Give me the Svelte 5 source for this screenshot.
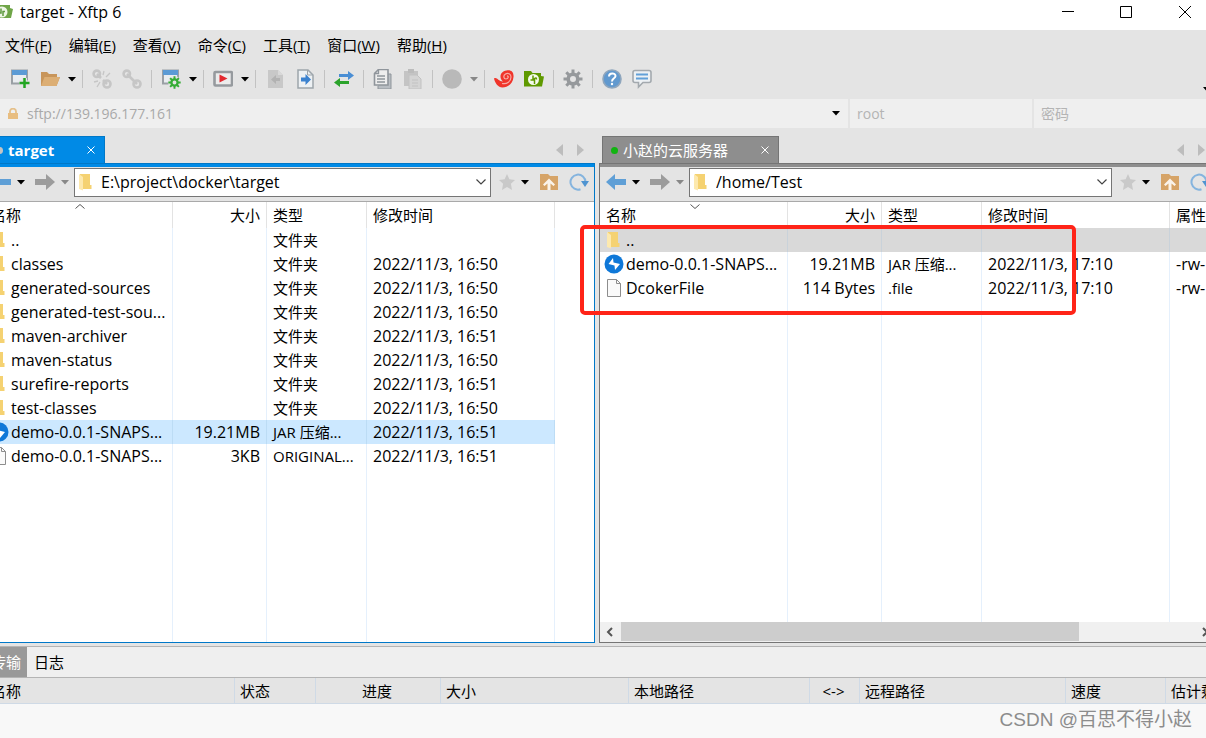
<script lang="ts">
	type FileRow = {
		icon: string;
		name: string;
		size?: string;
		type?: string;
		date?: string;
		attr?: string;
	};

	const menus = [
		["文件", "F"],
		["编辑", "E"],
		["查看", "V"],
		["命令", "C"],
		["工具", "T"],
		["窗口", "W"],
		["帮助", "H"],
	];

	// "|" = separator, "v" = drop-down arrow
	const tools = [
		"new", "open", "v", "|",
		"unlink", "link", "|",
		"session", "v", "|",
		"play", "v", "|",
		"docLeft", "docRight", "|",
		"sync", "|",
		"copy", "paste", "|",
		"globe", "vgray", "|",
		"xshell", "xftp", "|",
		"gear", "|",
		"help", "chat",
	];

	const localFiles: FileRow[] = [
		{ icon: "folder", name: "..", type: "文件夹" },
		{ icon: "folder", name: "classes", type: "文件夹", date: "2022/11/3, 16:50" },
		{ icon: "folder", name: "generated-sources", type: "文件夹", date: "2022/11/3, 16:50" },
		{ icon: "folder", name: "generated-test-sou...", type: "文件夹", date: "2022/11/3, 16:50" },
		{ icon: "folder", name: "maven-archiver", type: "文件夹", date: "2022/11/3, 16:51" },
		{ icon: "folder", name: "maven-status", type: "文件夹", date: "2022/11/3, 16:50" },
		{ icon: "folder", name: "surefire-reports", type: "文件夹", date: "2022/11/3, 16:51" },
		{ icon: "folder", name: "test-classes", type: "文件夹", date: "2022/11/3, 16:50" },
		{ icon: "jar", name: "demo-0.0.1-SNAPS...", size: "19.21MB", type: "JAR 压缩...", date: "2022/11/3, 16:51" },
		{ icon: "file", name: "demo-0.0.1-SNAPS...", size: "3KB", type: "ORIGINAL...", date: "2022/11/3, 16:51" },
	];

	const remoteFiles: FileRow[] = [
		{ icon: "folder", name: ".." },
		{ icon: "jar", name: "demo-0.0.1-SNAPS...", size: "19.21MB", type: "JAR 压缩...", date: "2022/11/3, 17:10", attr: "-rw-" },
		{ icon: "file", name: "DcokerFile", size: "114 Bytes", type: ".file", date: "2022/11/3, 17:10", attr: "-rw-" },
	];

	let host = $state("sftp://139.196.177.161");
	let user = $state("");
	let password = $state("");
	let localPath = $state("E:\\project\\docker\\target");
	let remotePath = $state("/home/Test");
	let localSelected = $state(8);
	let remoteSelected = $state(0);
</script>

{#snippet caret(gray = false)}
	<svg class="caret" class:gray width="8" height="5" viewBox="0 0 8 5"><path d="M0 0h8L4 4.5z" /></svg>
{/snippet}

{#snippet chevron()}
	<svg width="12" height="8" viewBox="0 0 12 8"><path d="M1.5 1.5 6 6l4.500-4.500" fill="none" stroke="#444" stroke-width="1.200" /></svg>
{/snippet}

{#snippet gearShape(color: string)}
	<g stroke={color} fill="none">
		<circle cx="10" cy="10" r="4.800" stroke-width="3.600" />
		<path d="M10 0.500v4M10 15.500v4M0.500 10h4M15.500 10h4M3.300 3.300l2.800 2.800M13.900 13.900l2.800 2.800M3.300 16.700l2.800-2.800M13.900 6.100l2.800-2.800" stroke-width="3" />
	</g>
{/snippet}

{#snippet toolIcon(name: string)}
	<svg width="20" height="20" viewBox="0 0 20 20">
		{#if name === "new"}
			<path d="M2 1.500h15v13H2z" fill="#e9edf0" stroke="#9aa0a5" stroke-width="2" />
			<path d="M2 1h15v5H2z" fill="#5b9bd5" />
			<path d="M14.500 9v10M9.500 14h10" stroke="#e4e4e4" stroke-width="5" />
			<path d="M14.500 9v10M9.500 14h10" stroke="#22a522" stroke-width="2.500" />
		{:else if name === "open"}
			<path d="M1 3h6l2 2h8v3h3l-3.500 9H1z" fill="#c8955a" />
			<path d="M4.500 8H20l-3.500 9H1z" fill="#dcae74" />
		{:else if name === "unlink" || name === "link"}
			<g fill="none" stroke="#c6c6c6" stroke-width="2.600">
				<circle cx="4.800" cy="4.800" r="3.200" />
				<circle cx="15" cy="15" r="3.500" />
				{#if name === "link"}
					<path d="M5 5l10 10" />
				{:else}
					<path d="M5 5l4 4M11 11l4 4" />
					<path d="M11 6l1-4M14 8l4-4M6 12l-4 1M8 13l-3 5" stroke-width="1.300" />
				{/if}
			</g>
		{:else if name === "session"}
			<path d="M2 1.500h15v13H2z" fill="#e9edf0" stroke="#9aa0a5" stroke-width="2" />
			<path d="M2 1h15v5H2z" fill="#5b9bd5" />
			<circle cx="13.500" cy="13.500" r="6.500" fill="#e4e4e4" />
			<g transform="translate(7 7) scale(.65)">{@render gearShape("#35ad35")}</g>
		{:else if name === "play"}
			<rect x="1.500" y="3" width="17.500" height="13.500" rx="1" fill="#ececec" stroke="#969a9e" stroke-width="2.600" />
			<path d="M6.500 5.500v8l8-4z" fill="#e3292f" />
		{:else if name === "docLeft"}
			<path d="M3 1h10l5 5v13H3z" fill="#c8c8c8" />
			<path d="M13 1v5h5" fill="#d9d9d9" />
			<path d="M6 10.500l5-4.500v3h4v3h-4v3z" fill="#b2b2b2" />
		{:else if name === "docRight"}
			<path d="M3 1h10l5 5v13H3z" fill="#edf1f4" stroke="#9da5ab" stroke-width="1.500" />
			<path d="M12.500 1v5H18" fill="none" stroke="#9da5ab" />
			<path d="M16 10.500 10.500 5v3.500H6v4h4.500V16z" fill="#3b82cf" />
		{:else if name === "sync"}
			<path d="M5 5h9V2l6 4.500-6 4.500V8H5z" fill="#4a8ed4" />
			<path d="M15 12H6V9L0 13.500 6 18v-3h9z" fill="#2ba32b" />
		{:else if name === "copy"}
			<path d="M6 5h12v15H5v-3" fill="#b8bdc2" stroke="#8f959b" />
			<path d="M1.500 4.500 5.500.500H15V16H1.500z" fill="#ededed" stroke="#8f959b" stroke-width="1.600" />
			<path d="M5.500.500v4h-4M4 7h8M4 10h8M4 13h8" fill="none" stroke="#8f959b" stroke-width="1.300" />
		{:else if name === "paste"}
			<path d="M1 2h14v15H1z" fill="#c4c4c4" />
			<path d="M5 0h6v4H5z" fill="#bcbcbc" />
			<path d="M6 6h8l4 4v10H6z" fill="#d4d4d4" stroke="#c2c2c2" />
			<path d="M9 11h6M9 14h6M9 17h6" stroke="#c2c2c2" />
		{:else if name === "globe"}
			<circle cx="10" cy="10" r="9.800" fill="#b9b9b9" />
		{:else if name === "xshell"}
			<path d="M0 9.500c3-2 4 3 9 3-4-3-3.500-10 3.500-11C17 .500 20 3 19.500 8c-.500 7-6 10.500-11 10.500C4 18.500 1 14 0 9.500z" fill="#f0352b" />
			<path d="M8 14.500c5 1 9-2 9-6.500 0-3-3-4.500-5.500-3S9.500 10 12 10s3-3 1-3.200" fill="none" stroke="#f7aaa4" stroke-width="1.200" />
		{:else if name === "xftp"}
			<path d="M0 2h7l1.500 2H17v3l3 .500-2 10H0z" fill="#5f9900" />
			<circle cx="9.500" cy="10.500" r="5.500" fill="#f4faec" />
			<path d="M9 6.500V11H6.500M10.500 15v-5.500q2-1.500 2 1" fill="none" stroke="#5f9900" stroke-width="1.500" />
		{:else if name === "gear"}
			{@render gearShape("#96999c")}
		{:else if name === "help"}
			<circle cx="10" cy="10" r="9" fill="#6199cf" stroke="#8fa6bd" stroke-width="1.600" />
			<path d="M7 7.500c0-4 6.500-4 6.500-.500C13.500 9.500 10 9 10 12.500" fill="none" stroke="#fff" stroke-width="2" />
			<circle cx="10" cy="15" r="1.200" fill="#fff" />
		{:else if name === "chat"}
			<path d="M3 1.500h14q2 0 2 2v8q0 2-2 2h-6L6.500 18v-4.500H3q-2 0-2-2v-8q0-2 2-2z" fill="#edf1f4" stroke="#a3a9ae" stroke-width="1.600" />
			<path d="M4 5.500h12M4 9.500h12" stroke="#62a0d8" stroke-width="2" />
		{/if}
	</svg>
{/snippet}

{#snippet fileIcon(name: string)}
	<svg class="file-icon" width="16" height="18" viewBox="0 0 16 18">
		{#if name === "folder"}
			<path d="M2 1h10v11h1.500v4H2z" fill="#f5d272" />
			<path d="M1 1 5 4v13.500L1 16z" fill="#fde9ae" />
		{:else if name === "jar"}
			<circle cx="8" cy="9" r="9.500" fill="#0f78d8" />
			<path d="M7 3l.500 4.500L14 9l-5 6-.500-4.500L2.500 9z" fill="#fff" />
		{:else}
			<path d="M1.500.500h9l4 4v13h-13z" fill="#fafafa" stroke="#8d8d8d" />
			<path d="M10.500.500v4h4" fill="none" stroke="#8d8d8d" />
		{/if}
	</svg>
{/snippet}

{#snippet tab(title: string, remote: boolean)}
	<div class="tabs">
		<button class="tab" class:bold={!remote}>
			<span class="dot" class:online={remote}></span>
			<span class="tab-title">{title}</span>
			<svg width="8" height="8" viewBox="0 0 8 8"><path d="M.500.500l7 7M7.500.500l-7 7" stroke="#fff" /></svg>
		</button>
		<span class="tab-scroll">
			<svg width="7" height="12" viewBox="0 0 7 12"><path d="M7 0v12L0 6z" fill="#bdbdbd" /></svg>
			<svg width="7" height="12" viewBox="0 0 7 12"><path d="M0 0v12l7-6z" fill="#bdbdbd" /></svg>
		</span>
	</div>
{/snippet}

{#snippet navBack()}
	<button class="nav" aria-label="后退">
		<svg width="20" height="18" viewBox="0 0 20 18"><path d="M0 9l9-8v5h11v6H9v5z" fill="#5f9fd6" /></svg>
		{@render caret()}
	</button>
	<button class="nav" aria-label="前进">
		<svg width="20" height="18" viewBox="0 0 20 18"><path d="M20 9l-9-8v5H0v6h11v5z" fill="#9c9c9c" /></svg>
		{@render caret(true)}
	</button>
{/snippet}

{#snippet navActions()}
	<button class="nav star" aria-label="收藏">
		<svg width="16" height="16" viewBox="0 0 16 16"><path d="M8 0l2.400 5.200 5.600.700-4.100 3.900L13 16l-5-3-5 3 1.100-6.200L0 5.900l5.600-.700z" fill="#c9c9c9" /></svg>
		{@render caret()}
	</button>
	<button class="nav" aria-label="上级目录">
		<svg width="20" height="18" viewBox="0 0 20 18">
			<path d="M1 1h8l2 2h8v14H1z" fill="#d6a468" />
			<path d="M10 5.500l6 6-1.500 1.500-3-2.500V17h-3v-6.500L5.500 13 4 11.500z" fill="#faf3ea" />
		</svg>
	</button>
	<button class="nav" aria-label="刷新">
		<svg width="20" height="18" viewBox="0 0 20 18">
			<path d="M11.500 16.200A7.500 7.500 0 1 1 16.500 9" fill="none" stroke="#85b4de" stroke-width="2" />
			<path d="M12 8h8l-4 6z" fill="#4f94d1" />
		</svg>
	</button>
{/snippet}

{#snippet fileTable(rows: FileRow[], selected: number, pick: (i: number) => void)}
	<table class="files">
		<thead>
			<tr>
				<th class="name">名称</th>
				<th class="size">大小</th>
				<th class="type">类型</th>
				<th class="date">修改时间</th>
				<th class="attr">{rows === remoteFiles ? "属性" : ""}</th>
			</tr>
		</thead>
		<tbody>
			{#each rows as row, i}
				<tr class:selected={i === selected} onclick={() => pick(i)}>
					<td><span class="entry">{@render fileIcon(row.icon)}{row.name}</span></td>
					<td class="size">{row.size ?? ""}</td>
					<td class="kind">{row.type ?? ""}</td>
					<td>{row.date ?? ""}</td>
					<td>{row.attr ?? ""}</td>
				</tr>
			{/each}
			<tr class="filler"><td></td><td></td><td></td><td></td><td></td></tr>
		</tbody>
	</table>
{/snippet}

<div class="window">
	<header class="titlebar">
		<svg width="20" height="16" viewBox="0 0 20 16">
			<path d="M0 1h17v3l3 1-2 9H0z" fill="#6fa548" />
			<circle cx="9" cy="8" r="5.500" fill="#eef6e6" />
			<path d="M8 4.500V9H6M10 12V7.500h2" fill="none" stroke="#5f9940" stroke-width="1.500" />
		</svg>
		<h1>target - Xftp 6</h1>
		<button aria-label="最小化"><svg width="12" height="12" viewBox="0 0 12 12"><path d="M0 5.500h12" /></svg></button>
		<button aria-label="最大化"><svg width="12" height="12" viewBox="0 0 12 12"><path d="M.500.500h11v11H.500z" /></svg></button>
		<button aria-label="关闭"><svg width="12" height="12" viewBox="0 0 12 12"><path d="M0 0l12 12M12 0 0 12" /></svg></button>
	</header>

	<nav class="menubar">
		{#each menus as [label, key]}
			<button>{label}(<u>{key}</u>)</button>
		{/each}
	</nav>

	<div class="toolbar">
		{#each tools as tool}
			{#if tool === "|"}
				<span class="separator"></span>
			{:else if tool === "v" || tool === "vgray"}
				<button class="drop" aria-label="更多">{@render caret(tool === "vgray")}</button>
			{:else}
				<button class="tool" aria-label={tool}>{@render toolIcon(tool)}</button>
			{/if}
		{/each}
		<span class="overflow">{@render caret()}</span>
	</div>

	<div class="address">
		<label class="host">
			<svg width="12" height="12" viewBox="0 0 12 12">
				<path d="M3 5V3.500a3 2.800 0 0 1 6 0V5" fill="none" stroke="#e5c08a" stroke-width="1.800" />
				<path d="M1 5h10v6H1z" fill="#e8bd80" />
			</svg>
			<input aria-label="主机" bind:value={host} />
			{@render caret()}
		</label>
		<input aria-label="用户名" placeholder="root" bind:value={user} />
		<input aria-label="密码" type="password" placeholder="密码" bind:value={password} />
	</div>

	<main class="panes">
		<section class="pane local">
			{@render tab("target", false)}
			<div class="pane-body">
				<div class="pathbar">
					{@render navBack()}
					<label class="path">
						{@render fileIcon("folder")}
						<input aria-label="本地路径" bind:value={localPath} />
						{@render chevron()}
					</label>
					{@render navActions()}
				</div>
				<div class="listing">
					<svg class="sort" width="10" height="5" viewBox="0 0 10 5"><path d="M.500 4.500 5 .500l4.500 4" /></svg>
					{@render fileTable(localFiles, localSelected, (i) => (localSelected = i))}
				</div>
			</div>
		</section>

		<section class="pane remote">
			{@render tab("小赵的云服务器", true)}
			<div class="pane-body">
				<div class="pathbar">
					{@render navBack()}
					<label class="path">
						{@render fileIcon("folder")}
						<input aria-label="远程路径" bind:value={remotePath} />
						{@render chevron()}
					</label>
					{@render navActions()}
				</div>
				<div class="listing">
					<svg class="sort" width="10" height="5" viewBox="0 0 10 5"><path d="M.500.500 5 4.500l4.500-4" /></svg>
					{@render fileTable(remoteFiles, remoteSelected, (i) => (remoteSelected = i))}
				</div>
				<div class="scrollbar">
					<svg width="7" height="10" viewBox="0 0 7 10"><path d="M6 1 2 5l4 4" /></svg>
					<div class="track"><div class="thumb"></div></div>
					<svg width="7" height="10" viewBox="0 0 7 10"><path d="M1 1l4 4-4 4" /></svg>
				</div>
			</div>
			<div class="highlight"></div>
		</section>
	</main>

	<footer class="transfer">
		<div class="bottom-tabs">
			<button class="active">传输</button>
			<button>日志</button>
		</div>
		<table class="queue">
			<thead>
				<tr>
					<th class="q-name">名称</th>
					<th class="q-state">状态</th>
					<th class="q-progress">进度</th>
					<th class="q-size">大小</th>
					<th class="q-local">本地路径</th>
					<th class="q-dir">&lt;-&gt;</th>
					<th class="q-remote">远程路径</th>
					<th class="q-speed">速度</th>
					<th>估计剩余</th>
				</tr>
			</thead>
		</table>
		<p class="watermark">CSDN @百思不得小赵</p>
	</footer>
</div>

<style>
	:global(body) {
		margin: 0;
		overflow: hidden;
	}

	.window {
		min-height: 100vh;
		margin: 0 -10px 0 -16px;
		display: flex;
		flex-direction: column;
		background: #e4e4e4;
		color: #000;
		font: 15px/20px "Open Sans", "Noto Sans CJK SC", sans-serif;
	}

	button {
		padding: 0;
		border: none;
		background: none;
		color: inherit;
		font: inherit;
	}

	input {
		min-width: 0;
		padding: 0;
		border: none;
		outline: none;
		background: transparent;
		color: inherit;
		font: inherit;
	}

	svg {
		display: block;
		flex: none;
	}

	.caret {
		fill: #000;
	}

	.caret.gray {
		fill: #888;
	}

	.titlebar {
		height: 30px;
		padding: 0 9px 6px;
		box-sizing: border-box;
		display: flex;
		align-items: center;
		background: #fff;
	}

	.titlebar h1 {
		flex: 1;
		margin: 0 0 0 7px;
		font-size: 16px;
		font-weight: 400;
	}

	.titlebar button {
		width: 58px;
		display: grid;
		place-items: center;
	}

	.titlebar button:last-child {
		width: 44px;
		margin-left: 8px;
	}

	.titlebar button path {
		fill: none;
		stroke: #000;
	}

	.menubar {
		height: 32px;
		padding: 0 0 2px 21px;
		box-sizing: border-box;
		display: flex;
		align-items: center;
		gap: 17px;
	}

	.toolbar {
		height: 37px;
		padding: 0 5px 3px 21px;
		box-sizing: border-box;
		display: flex;
		align-items: center;
	}

	.tool {
		width: 30px;
		display: grid;
		place-items: center;
	}

	.drop {
		width: 13px;
		display: grid;
		place-items: center;
	}

	.separator {
		width: 1px;
		height: 18px;
		margin: 0 4px;
		background: #c2c2c2;
	}

	.overflow {
		margin-left: auto;
		align-self: flex-end;
		padding-bottom: 4px;
	}

	.address {
		height: 29px;
		display: grid;
		grid-template-columns: 864fr 182fr 182fr;
		gap: 2px;
		color: #a9a9a9;
		font-size: 14px;
	}

	.address > * {
		background: #efefef;
	}

	.address > input {
		padding-left: 7px;
	}

	.address input::placeholder {
		color: #b4b4b4;
	}

	.host {
		padding: 0 8px 0 23px;
		display: flex;
		align-items: center;
		gap: 8px;
	}

	.host input {
		flex: 1;
	}

	.panes {
		flex: 1;
		display: grid;
		grid-template-columns: 611fr 617fr;
		gap: 4px;
		padding-bottom: 3px;
	}

	.pane {
		position: relative;
		display: flex;
		flex-direction: column;
		--accent: #008ae6;
		--edge: #0078c8;
	}

	.remote {
		--accent: #8e8e8e;
		--edge: #757575;
	}

	.tabs {
		height: 35px;
		padding: 0 11px 0 3px;
		display: flex;
		align-items: flex-end;
		justify-content: space-between;
	}

	.tab {
		height: 27px;
		padding: 0 9px 0 8px;
		display: flex;
		align-items: center;
		background: var(--accent);
		border: 1px solid var(--edge);
		border-bottom: none;
		color: #fff;
	}

	.bold {
		font-weight: 700;
	}

	.dot {
		width: 7px;
		height: 7px;
		border-radius: 50%;
		background: #c4c4c4;
	}

	.online {
		background: #10b410;
	}

	.tab-title {
		margin: 0 33px 0 5px;
	}

	.tab-scroll {
		height: 27px;
		display: flex;
		align-items: center;
		gap: 14px;
	}

	.pane-body {
		flex: 1;
		display: flex;
		flex-direction: column;
		border: 1px solid var(--edge);
		box-shadow: inset 0 3px var(--accent);
	}

	.pathbar {
		height: 34px;
		padding: 1px 5px 2px 6px;
		display: flex;
		align-items: center;
		border-bottom: 1px solid #a9a9a9;
	}

	.nav {
		display: flex;
		align-items: center;
		gap: 6px;
		margin-right: 10px;
	}

	.nav:last-child {
		margin-right: 0;
	}

	.star {
		margin: 0 10px 0 8px;
	}

	.path {
		flex: 1;
		height: 27px;
		margin-left: -5px;
		padding: 0 3px;
		display: flex;
		align-items: center;
		gap: 7px;
		border: 1px solid #757575;
		background: #fff;
		font-size: 16px;
	}

	.path input {
		flex: 1;
	}

	.listing {
		flex: 1;
		position: relative;
		display: flex;
		overflow: hidden;
		background: #fff;
	}

	.sort {
		position: absolute;
		top: 2px;
		left: 90px;
		fill: none;
		stroke: #555;
	}

	table {
		width: 100%;
		border-collapse: separate;
		border-spacing: 0;
		table-layout: fixed;
	}

	th {
		font-weight: 400;
		text-align: left;
	}

	th,
	td {
		padding: 0 6px;
		white-space: nowrap;
		overflow: hidden;
	}

	.files th {
		height: 26px;
		border-right: 1px solid #e3e3e3;
	}

	.files td {
		height: 24px;
		border-right: 1px solid #e5f0fc;
		font-size: 16px;
	}

	.files .kind {
		font-size: 15px;
	}

	.files .filler td {
		height: auto;
	}

	.files th:last-child,
	.files td:last-child {
		border-right: none;
	}

	.files .name,
	.files .date {
		width: 175px;
	}

	.files .size {
		width: 81px;
		text-align: right;
	}

	.files .type {
		width: 87px;
	}

	.entry {
		display: flex;
		align-items: center;
		gap: 4px;
	}

	.file-icon {
		overflow: visible;
	}

	.local .selected td:not(:last-child) {
		background: #cce8ff;
		border-color: #bcdcf5;
	}

	.remote .selected td {
		background: #d9d9d9;
		border-color: #c9d2da;
	}

	.scrollbar {
		height: 20px;
		padding: 0 6px;
		display: flex;
		align-items: center;
		gap: 8px;
		background: #f0f0f0;
	}

	.scrollbar path {
		fill: none;
		stroke: #555;
		stroke-width: 2;
	}

	.track {
		flex: 1;
		align-self: stretch;
	}

	.thumb {
		width: 80%;
		height: 19px;
		background: #cdcdcd;
	}

	.highlight {
		position: absolute;
		top: 97px;
		left: -19px;
		width: 488px;
		height: 82px;
		border: 4px solid #ff2418;
		border-radius: 5px;
		pointer-events: none;
	}

	.transfer {
		position: relative;
		height: 92px;
		background: #f8f8f8;
		border-top: 1px solid #b4b4b4;
		box-sizing: border-box;
	}

	.bottom-tabs {
		height: 30px;
		padding-left: 4px;
		display: flex;
		background: #efefef;
		border-bottom: 1px solid #b4b4b4;
	}

	.bottom-tabs button {
		padding: 0 7px;
	}

	.bottom-tabs .active {
		padding: 0 6px 0 3px;
		background: #999;
		color: #fff;
	}

	.queue th {
		height: 25px;
		padding: 0 7px 0 5px;
		background: #e4e4e4;
		border-right: 1px solid #cfdae6;
		border-bottom: 1px solid #cfdae6;
	}

	.queue .q-name {
		width: 236px;
		padding-left: 7px;
	}

	.queue .q-state {
		width: 68px;
	}

	.queue .q-progress {
		width: 112px;
		text-align: center;
	}

	.queue .q-size {
		width: 175px;
	}

	.queue .q-local {
		width: 168px;
	}

	.queue .q-dir {
		width: 37px;
		text-align: center;
	}

	.queue .q-remote {
		width: 193px;
	}

	.queue .q-speed {
		width: 87px;
	}

	.watermark {
		position: absolute;
		right: 24px;
		bottom: 6px;
		margin: 0;
		color: #8c8c8c;
		font: 19px/24px "Liberation Sans", "Noto Sans CJK SC", sans-serif;
	}
</style>
